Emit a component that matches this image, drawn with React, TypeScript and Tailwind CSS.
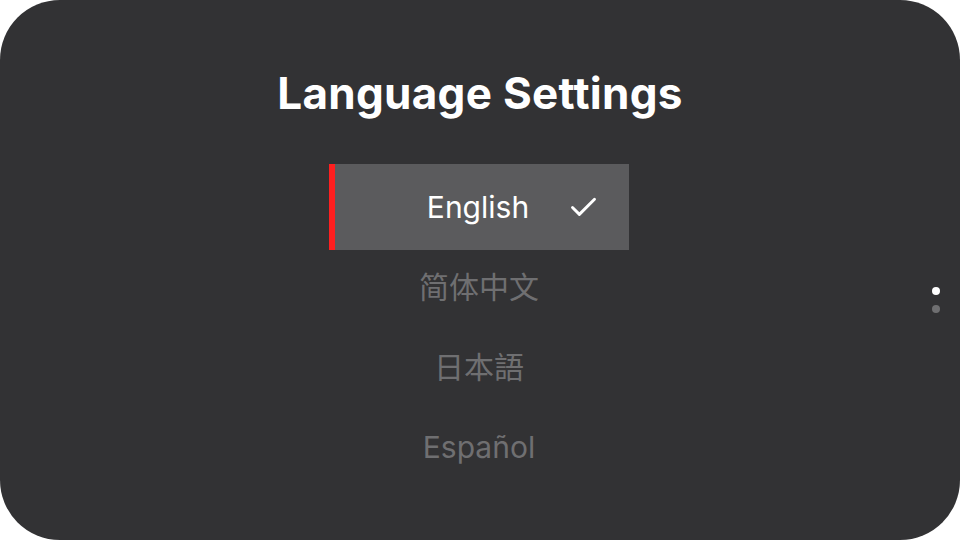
import { Check } from "lucide-react";

const languages = ["English", "简体中文", "日本語", "Español"];

export default function App() {
  const selected = 0;
  return (
    <div className="h-[540px] w-[960px] bg-white">
      <div
        className="relative flex h-full w-full flex-col items-center rounded-[60px] bg-[#323234] pt-[63px]"
        style={{ fontFamily: 'Inter, "Noto Sans CJK SC", "Noto Sans CJK JP", sans-serif' }}
      >
        <h1 className="text-[44px] font-bold leading-[60px] tracking-[0.3px] text-white">Language Settings</h1>

        <ul className="mt-[44px] -ml-[2px] flex w-[300px] flex-col">
          {languages.map((lang, i) =>
            i === selected ? (
              <li
                key={lang}
                className="relative -my-[3px] flex h-[86px] items-center justify-center border-l-[6px] border-[#ff1f1f] bg-[#5b5b5d] text-[30px] text-white"
              >
                <span className="-ml-[8px]">{lang}</span>
                <Check className="absolute right-[29px] h-[33px] w-[33px]" strokeWidth={2.1} />
              </li>
            ) : (
              <li
                key={lang}
                className="flex h-[80px] items-center justify-center text-[30px] text-[#6f6f71]"
              >
                {lang}
              </li>
            )
          )}
        </ul>

        <div className="absolute right-[20px] top-[287px] flex flex-col gap-[10px]">
          <span className="h-[8px] w-[8px] rounded-full bg-white" />
          <span className="h-[8px] w-[8px] rounded-full bg-[#6f6f71]" />
        </div>
      </div>
    </div>
  );
}
